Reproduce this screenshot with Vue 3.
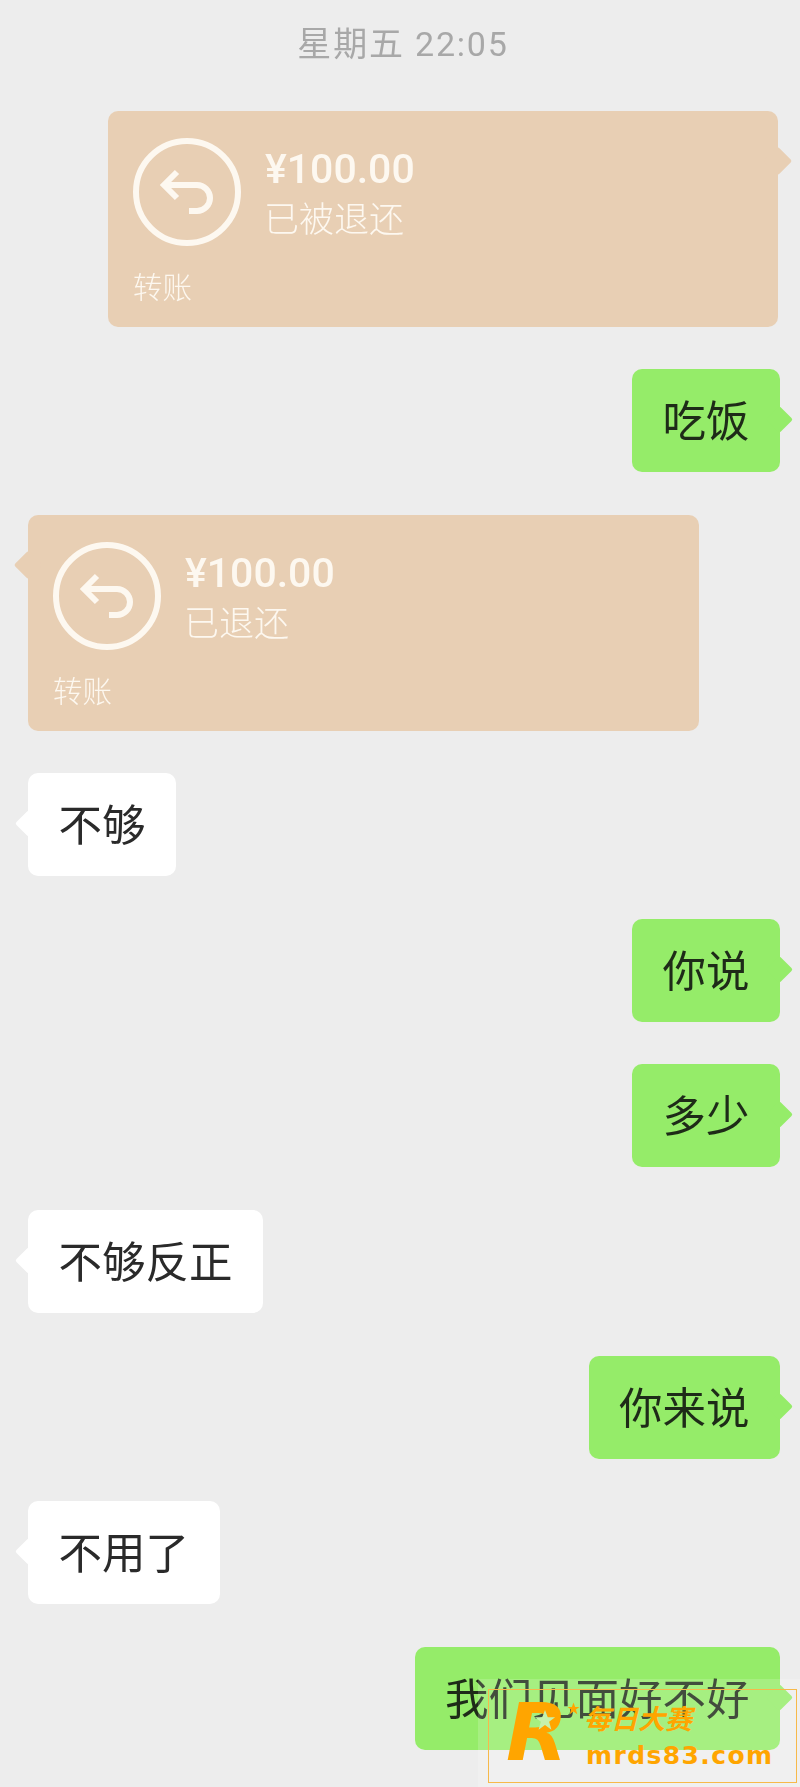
<script setup>
const messages = [
  { id: 1, side: "right", type: "transfer", status: "已被退还" },
  { id: 2, side: "right", text: "吃饭" },
  { id: 3, side: "left", type: "transfer", status: "已退还" },
  { id: 4, side: "left", text: "不够" },
  { id: 5, side: "right", text: "你说" },
  { id: 6, side: "right", text: "多少" },
  { id: 7, side: "left", text: "不够反正" },
  { id: 8, side: "right", text: "你来说" },
  { id: 9, side: "left", text: "不用了" },
  { id: 10, side: "right", text: "我们见面好不好" },
];
</script>

<template>
  <div class="page">
    <div class="time">星期五 22:05</div>

    <div class="list">
      <div v-for="m in messages" :key="m.id" class="row" :class="m.side">
        <div v-if="m.type === 'transfer'" class="card">
          <div class="card-top">
            <svg class="icon" width="108" height="108" viewBox="0 0 108 108" fill="none">
              <circle cx="54" cy="54" r="51" stroke="#fdf8f0" stroke-width="6" />
              <path
                d="M44 34 L31 47 L44 60 M31 47 H64 a13 13 0 0 1 0 26 H56"
                stroke="#fdf8f0"
                stroke-width="6"
              />
            </svg>
            <div class="info">
              <div class="amount">¥100.00</div>
              <div class="status">{{ m.status }}</div>
            </div>
          </div>
          <div class="label">转账</div>
        </div>
        <div v-else class="bubble">{{ m.text }}</div>
      </div>
    </div>

    <div class="veil"></div>
    <div class="mark">
      <div class="logo">
        <span class="logo-r">R</span>
        <svg class="logo-star" width="22" height="22" viewBox="0 0 24 24">
          <path d="M12 1l3 8h8l-6.500 5 2.500 8.500-7-5-7 5 2.500-8.500L1 9h8z" fill="#c6f2ac" />
        </svg>
        <svg class="logo-star small" width="13" height="13" viewBox="0 0 24 24">
          <path d="M12 1l3 8h8l-6.500 5 2.500 8.500-7-5-7 5 2.500-8.500L1 9h8z" fill="#ffa500" />
        </svg>
      </div>
      <div class="mark-text">
        <div class="mark-cn">每日大赛</div>
        <div class="mark-url">mrds83.com</div>
      </div>
    </div>
  </div>
</template>

<style scoped>
.page {
  position: relative;
  width: 800px;
  height: 1787px;
  overflow: hidden;
  background: #ededed;
  font-family: "Noto Sans CJK SC", "Noto Sans", sans-serif;
}

.time {
  padding-top: 22px;
  padding-left: 6px;
  height: 89px;
  box-sizing: border-box;
  font-family: "Roboto", "Noto Sans CJK SC", sans-serif;
  font-size: 34px;
  line-height: 44px;
  text-align: center;
  letter-spacing: 1.800px;
  color: #a8a8a8;
  filter: blur(0.4px);
}

.list {
  display: flex;
  flex-direction: column;
  gap: 42.600px;
  padding-top: 21.500px;
  filter: blur(0.4px);
}

.row {
  display: flex;
}

.row.left {
  justify-content: flex-start;
  padding-left: 28px;
}

.row.right {
  justify-content: flex-end;
  padding-right: 20px;
}

.bubble {
  position: relative;
  height: 103px;
  padding: 0 30.500px;
  border-radius: 10px;
  font-size: 43.500px;
  line-height: 100px;
  color: #2a2a2a;
}

.left .bubble {
  background: #ffffff;
}

.right .bubble {
  background: #95ec69;
  color: #1e2b18;
}

.bubble::after,
.card::after {
  content: "";
  position: absolute;
  width: 19px;
  height: 19px;
  border-radius: 2px;
  background: inherit;
  transform: rotate(45deg);
}

.bubble::after {
  top: 41px;
}

.left .bubble::after {
  left: -9px;
}

.right .bubble::after {
  right: -9px;
}

.card {
  position: relative;
  box-sizing: border-box;
  width: 670px;
  height: 216px;
  padding: 27px 25px 0;
  border-radius: 10px;
  background: #e8cfb4;
  color: #fdf8f0;
}

.left .card {
  width: 671px;
}

.right .card {
  margin-right: 2px;
}

.card::after {
  top: 40px;
  width: 20px;
  height: 20px;
}

.left .card::after {
  left: -10px;
}

.right .card::after {
  right: -10px;
}

.card-top {
  display: flex;
  gap: 24px;
}

.icon {
  flex: none;
}

.info {
  display: flex;
  flex-direction: column;
}

.amount {
  margin-top: 9px;
  font-family: "Roboto", sans-serif;
  font-size: 41px;
  font-weight: 500;
  line-height: 44px;
}

.status {
  margin-top: 3px;
  margin-left: -1px;
  font-size: 35px;
  font-weight: 300;
  line-height: 46px;
}

.label {
  margin-top: 19px;
  font-size: 29.500px;
  font-weight: 300;
  line-height: 40px;
}

.veil {
  position: absolute;
  left: 478px;
  top: 1679px;
  right: 0;
  bottom: 0;
  background: rgba(255, 255, 255, 0.16);
}

.mark {
  position: absolute;
  left: 488px;
  top: 1689px;
  box-sizing: border-box;
  width: 309px;
  height: 94px;
  border: 1px solid #f7b94a;
  display: flex;
}

.logo {
  position: relative;
  width: 95px;
  flex: none;
}

.logo-r {
  position: absolute;
  left: 17px;
  top: -2px;
  font-family: "DejaVu Sans", sans-serif;
  font-size: 80px;
  font-style: italic;
  font-weight: 700;
  line-height: 90px;
  color: #ffa500;
}

.logo-star {
  position: absolute;
  left: 45px;
  top: 19px;
}

.logo-star.small {
  left: 78px;
  top: 12px;
}

.mark-text {
  display: flex;
  flex-direction: column;
  color: #ffa500;
}

.mark-cn {
  margin-top: 11px;
  font-size: 27px;
  font-style: italic;
  font-weight: 700;
  line-height: 34px;
}

.mark-url {
  margin-top: 7px;
  margin-left: 2px;
  font-family: "DejaVu Sans", sans-serif;
  font-size: 25px;
  font-weight: 700;
  line-height: 28px;
  letter-spacing: 1.400px;
}
</style>
